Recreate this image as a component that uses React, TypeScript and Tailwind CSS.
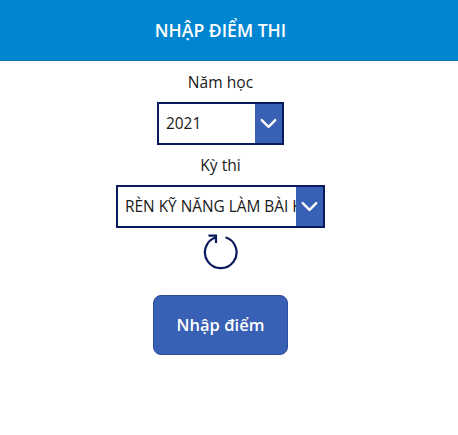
import { ChevronDown } from 'lucide-react';

function Dropdown({ value, width }: { value: string; width: string }) {
  return (
    <div className={`flex h-[43px] ${width} items-stretch border-2 border-[#0b1a5c] bg-white`}>
      <div className="flex-1 overflow-hidden whitespace-nowrap pl-[7px] text-[15.4px] leading-[40px] text-[#1a1a1a]">
        {value}
      </div>
      <div className="flex w-[27px] shrink-0 items-center justify-center bg-[#3860b4]">
        <ChevronDown className="size-[27px] text-white" strokeWidth={2.1} />
      </div>
    </div>
  );
}

export default function App() {
  return (
    <div className="h-[435px] w-[458px] overflow-hidden bg-white font-['Open_Sans',sans-serif]">
      <header className="flex h-[61px] w-full items-center border-b border-[#0b78b8] bg-[#0086d1]">
        <h1 className="w-[441px] text-center text-[17.6px] font-semibold text-white">NHẬP ĐIỂM THI</h1>
      </header>

      <main className="flex w-[441px] flex-col items-center">
        <label className="mt-[11px] h-[30px] text-[15.6px] leading-[20px] text-[#1a1a1a]">Năm học</label>
        <Dropdown value="2021" width="w-[127px]" />
        <label className="mt-[10px] h-[30px] text-[15.6px] leading-[20px] text-[#1a1a1a]">Kỳ thi</label>
        <Dropdown value="RÈN KỸ NĂNG LÀM BÀI KHỐI" width="w-[209px]" />

        <svg className="mt-[6px] size-[36px]" viewBox="0 0 36 36" fill="none" stroke="#0b1a5c" strokeWidth="2.2">
          <path d="M22.5 3.3 A15.8 15.8 0 1 1 13 3.3" />
          <path d="M5.5 1.6 L13 1.6 L13 9" />
        </svg>

        <button className="mt-[25px] h-[60px] w-[135px] rounded-[8px] border border-[#2f4d9a] bg-[#3860b4] text-[16.5px] font-semibold text-white">
          Nhập điểm
        </button>
      </main>
    </div>
  );
}
